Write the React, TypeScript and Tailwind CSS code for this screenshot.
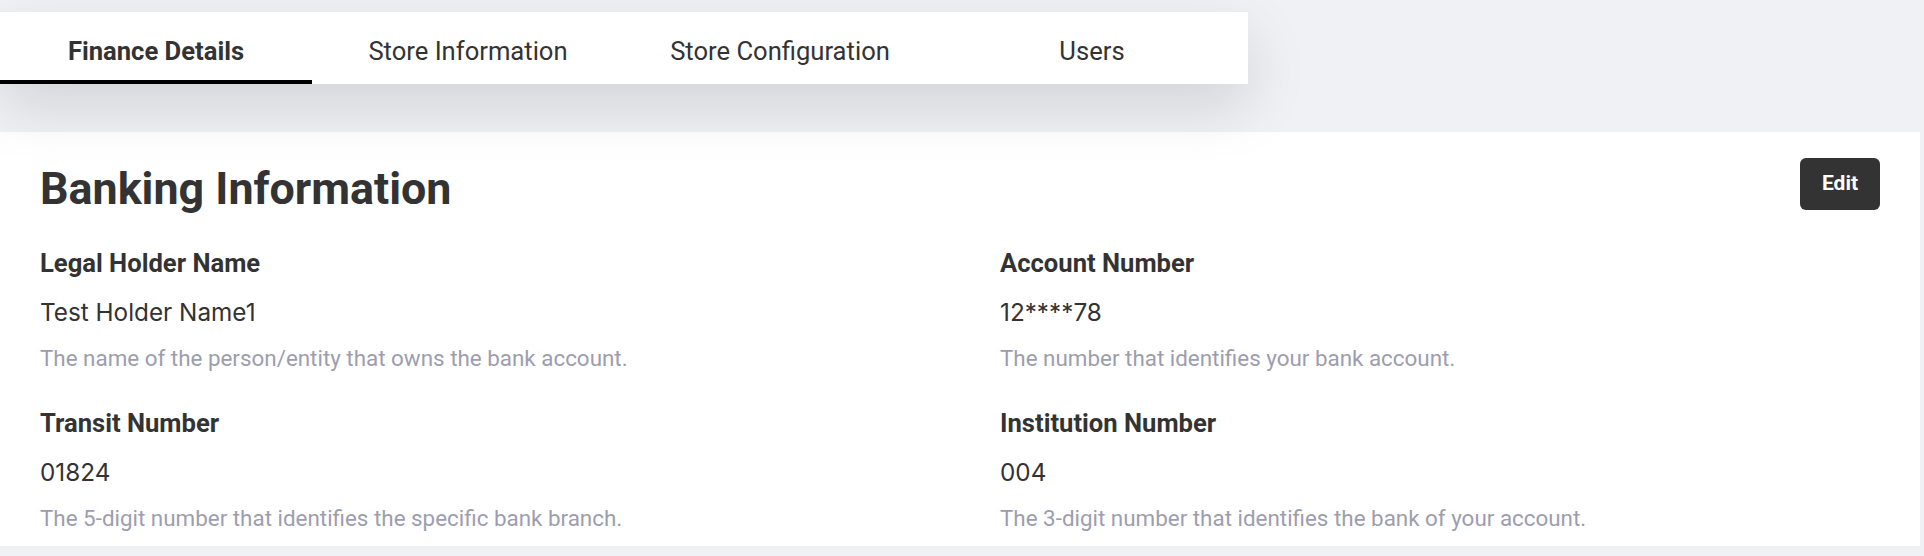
import React from 'react';

const tabs = ['Finance Details', 'Store Information', 'Store Configuration', 'Users'];

const fields = [
  { label: 'Legal Holder Name', value: 'Test Holder Name1', hint: 'The name of the person/entity that owns the bank account.' },
  { label: 'Account Number', value: '12****78', hint: 'The number that identifies your bank account.' },
  { label: 'Transit Number', value: '01824', hint: 'The 5-digit number that identifies the specific bank branch.' },
  { label: 'Institution Number', value: '004', hint: 'The 3-digit number that identifies the bank of your account.' },
];

export default function App() {
  const active = 0;

  return (
    <div className="min-h-screen bg-[#f0f1f5] pt-3 font-['Roboto',sans-serif] text-[#333333]">
      <div className="relative z-10 flex h-[72px] w-[1248px] bg-white shadow-[0_22px_60px_rgba(0,0,0,0.13)]">
        {tabs.map((t, i) => (
          <div
            key={t}
            className={
              'flex w-[312px] items-center justify-center border-b-4 pt-[11px] text-[25.6px] ' +
              (i === active ? 'border-black font-bold' : 'border-transparent')
            }
          >
            {t}
          </div>
        ))}
      </div>

      <div className="mt-12 w-[1920px] bg-white px-10 pb-[14px] pt-[26px]">
        <div className="flex items-start justify-between">
          <h1 className="mt-[6px] text-[44.8px] font-bold leading-[50px]">Banking Information</h1>
          <button className="h-[52px] w-[80px] rounded-md bg-[#333333] text-[21px] font-bold text-white">
            Edit
          </button>
        </div>

        <div className="mt-[33px] grid grid-cols-2 gap-x-20 gap-y-[35px]">
          {fields.map((f) => (
            <div key={f.label} className="flex flex-col">
              <div className="text-[25.6px] font-bold leading-8">{f.label}</div>
              <div className="mt-[17px] font-['Inter',sans-serif] text-[24.3px] leading-8">{f.value}</div>
              <div className="mt-4 text-[22.4px] leading-7 text-[#9d9db0]">{f.hint}</div>
            </div>
          ))}
        </div>
      </div>
    </div>
  );
}
